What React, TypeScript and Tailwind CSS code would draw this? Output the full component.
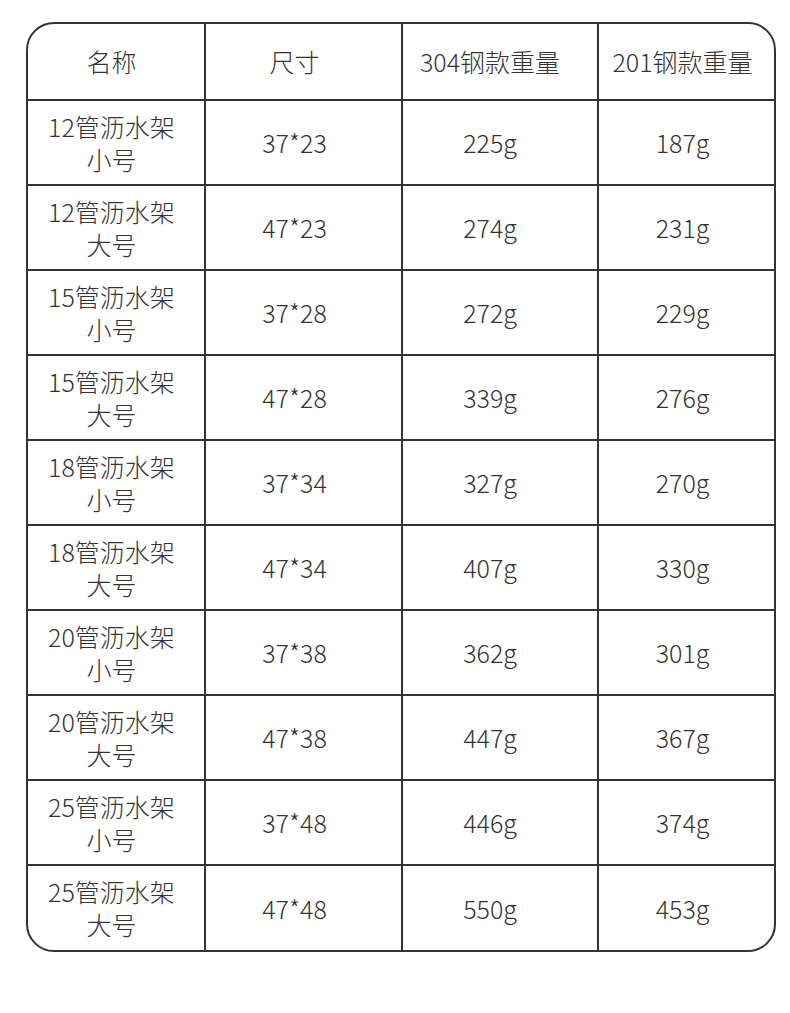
import React from 'react';

const rows = [
  { name: '12管沥水架', size: '小号', dim: '37*23', w304: '225g', w201: '187g' },
  { name: '12管沥水架', size: '大号', dim: '47*23', w304: '274g', w201: '231g' },
  { name: '15管沥水架', size: '小号', dim: '37*28', w304: '272g', w201: '229g' },
  { name: '15管沥水架', size: '大号', dim: '47*28', w304: '339g', w201: '276g' },
  { name: '18管沥水架', size: '小号', dim: '37*34', w304: '327g', w201: '270g' },
  { name: '18管沥水架', size: '大号', dim: '47*34', w304: '407g', w201: '330g' },
  { name: '20管沥水架', size: '小号', dim: '37*38', w304: '362g', w201: '301g' },
  { name: '20管沥水架', size: '大号', dim: '47*38', w304: '447g', w201: '367g' },
  { name: '25管沥水架', size: '小号', dim: '37*48', w304: '446g', w201: '374g' },
  { name: '25管沥水架', size: '大号', dim: '47*48', w304: '550g', w201: '453g' },
];

const cols = 'grid grid-cols-[178px_197px_196px_175px]';
const line = 'border-r-2 border-[#333]';
// text in the source sits a little left of each column's centre
const c1 = `flex flex-col items-center justify-center pr-[9px] ${line}`;
const c2 = `flex items-center justify-center pr-[18px] ${line}`;
const c3 = `flex items-center justify-center pr-[20px] ${line}`;
const c4 = 'flex items-center justify-center pr-[8px]';

export default function App() {
  return (
    <div className="w-[790px] h-[1013px] bg-white pt-[22px] pl-[26px] text-[25px] leading-[33px] font-light text-[#333] font-['Noto_Sans_CJK_SC','Noto_Sans',sans-serif]">
      <div className="w-[750px] border-2 border-[#333] rounded-[28px] overflow-hidden">
        {/* Header */}
        <div className={`${cols} h-[77px] border-b-2 border-[#333]`}>
          <div className={c1}>名称</div>
          <div className={c2}>尺寸</div>
          <div className={c3}>304钢款重量</div>
          <div className={c4}>201钢款重量</div>
        </div>

        {rows.map((r, i) => (
          <div
            key={i}
            className={`${cols} ${i === rows.length - 1 ? 'h-[84px]' : 'h-[85px] border-b-2 border-[#333]'}`}
          >
            <div className={c1}>
              <span>{r.name}</span>
              <span>{r.size}</span>
            </div>
            <div className={c2}>{r.dim}</div>
            <div className={c3}>{r.w304}</div>
            <div className={c4}>{r.w201}</div>
          </div>
        ))}
      </div>
    </div>
  );
}
